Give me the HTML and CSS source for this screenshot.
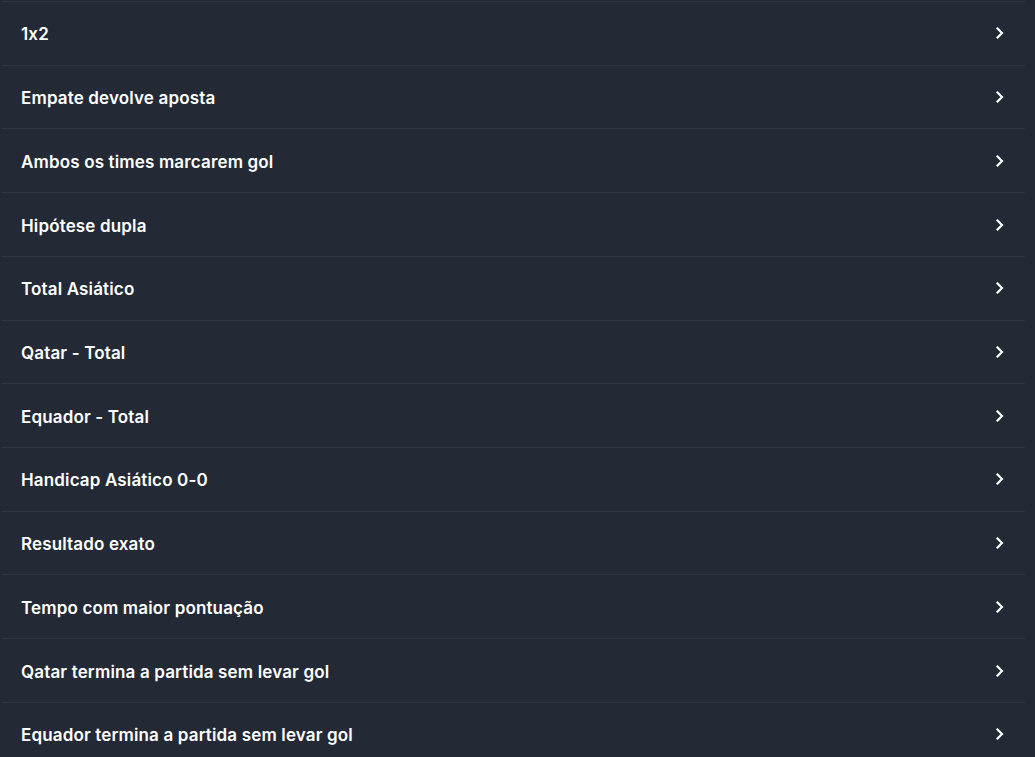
FILE: index.html
```html
<!DOCTYPE html>
<html>
<head>
<meta charset="utf-8">
<link rel="stylesheet" href="styles.css">
</head>
<body>
<ul class="markets">
  <li class="market"><span class="label">1x2</span><svg class="chev" viewBox="0 0 8 12"><path d="M1.5 1.5 L6 6 L1.5 10.5"/></svg></li>
  <li class="market"><span class="label">Empate devolve aposta</span><svg class="chev" viewBox="0 0 8 12"><path d="M1.5 1.5 L6 6 L1.5 10.5"/></svg></li>
  <li class="market"><span class="label">Ambos os times marcarem gol</span><svg class="chev" viewBox="0 0 8 12"><path d="M1.5 1.5 L6 6 L1.5 10.5"/></svg></li>
  <li class="market"><span class="label">Hipótese dupla</span><svg class="chev" viewBox="0 0 8 12"><path d="M1.5 1.5 L6 6 L1.5 10.5"/></svg></li>
  <li class="market"><span class="label">Total Asiático</span><svg class="chev" viewBox="0 0 8 12"><path d="M1.5 1.5 L6 6 L1.5 10.5"/></svg></li>
  <li class="market"><span class="label">Qatar - Total</span><svg class="chev" viewBox="0 0 8 12"><path d="M1.5 1.5 L6 6 L1.5 10.5"/></svg></li>
  <li class="market"><span class="label">Equador - Total</span><svg class="chev" viewBox="0 0 8 12"><path d="M1.5 1.5 L6 6 L1.5 10.5"/></svg></li>
  <li class="market"><span class="label">Handicap Asiático 0-0</span><svg class="chev" viewBox="0 0 8 12"><path d="M1.5 1.5 L6 6 L1.5 10.5"/></svg></li>
  <li class="market"><span class="label">Resultado exato</span><svg class="chev" viewBox="0 0 8 12"><path d="M1.5 1.5 L6 6 L1.5 10.5"/></svg></li>
  <li class="market"><span class="label">Tempo com maior pontuação</span><svg class="chev" viewBox="0 0 8 12"><path d="M1.5 1.5 L6 6 L1.5 10.5"/></svg></li>
  <li class="market"><span class="label">Qatar termina a partida sem levar gol</span><svg class="chev" viewBox="0 0 8 12"><path d="M1.5 1.5 L6 6 L1.5 10.5"/></svg></li>
  <li class="market"><span class="label">Equador termina a partida sem levar gol</span><svg class="chev" viewBox="0 0 8 12"><path d="M1.5 1.5 L6 6 L1.5 10.5"/></svg></li>
</ul>
</body>
</html>
```
FILE: styles.css
```css
html, body {
  margin: 0;
  padding: 0;
  background: #232a35;
  overflow: hidden;
}
.markets {
  list-style: none;
  margin: 0;
  padding: 1px 10px 0 2px;
}
.market {
  display: flex;
  align-items: center;
  justify-content: space-between;
  height: 62.72px;
  border-top: 1px solid #2f3742;
  padding: 0 21px 0 19px;
  font-family: "Inter", "Noto Sans", sans-serif;
  font-feature-settings: "calt" 0;
  font-weight: 600;
  font-size: 17px;
  letter-spacing: 0.15px;
  color: #ffffff;
}
.label {
  margin-top: 2px;
}
.chev {
  width: 8px;
  height: 12px;
  fill: none;
  stroke: #ffffff;
  stroke-width: 2.2;
  stroke-linecap: square;
}
```
